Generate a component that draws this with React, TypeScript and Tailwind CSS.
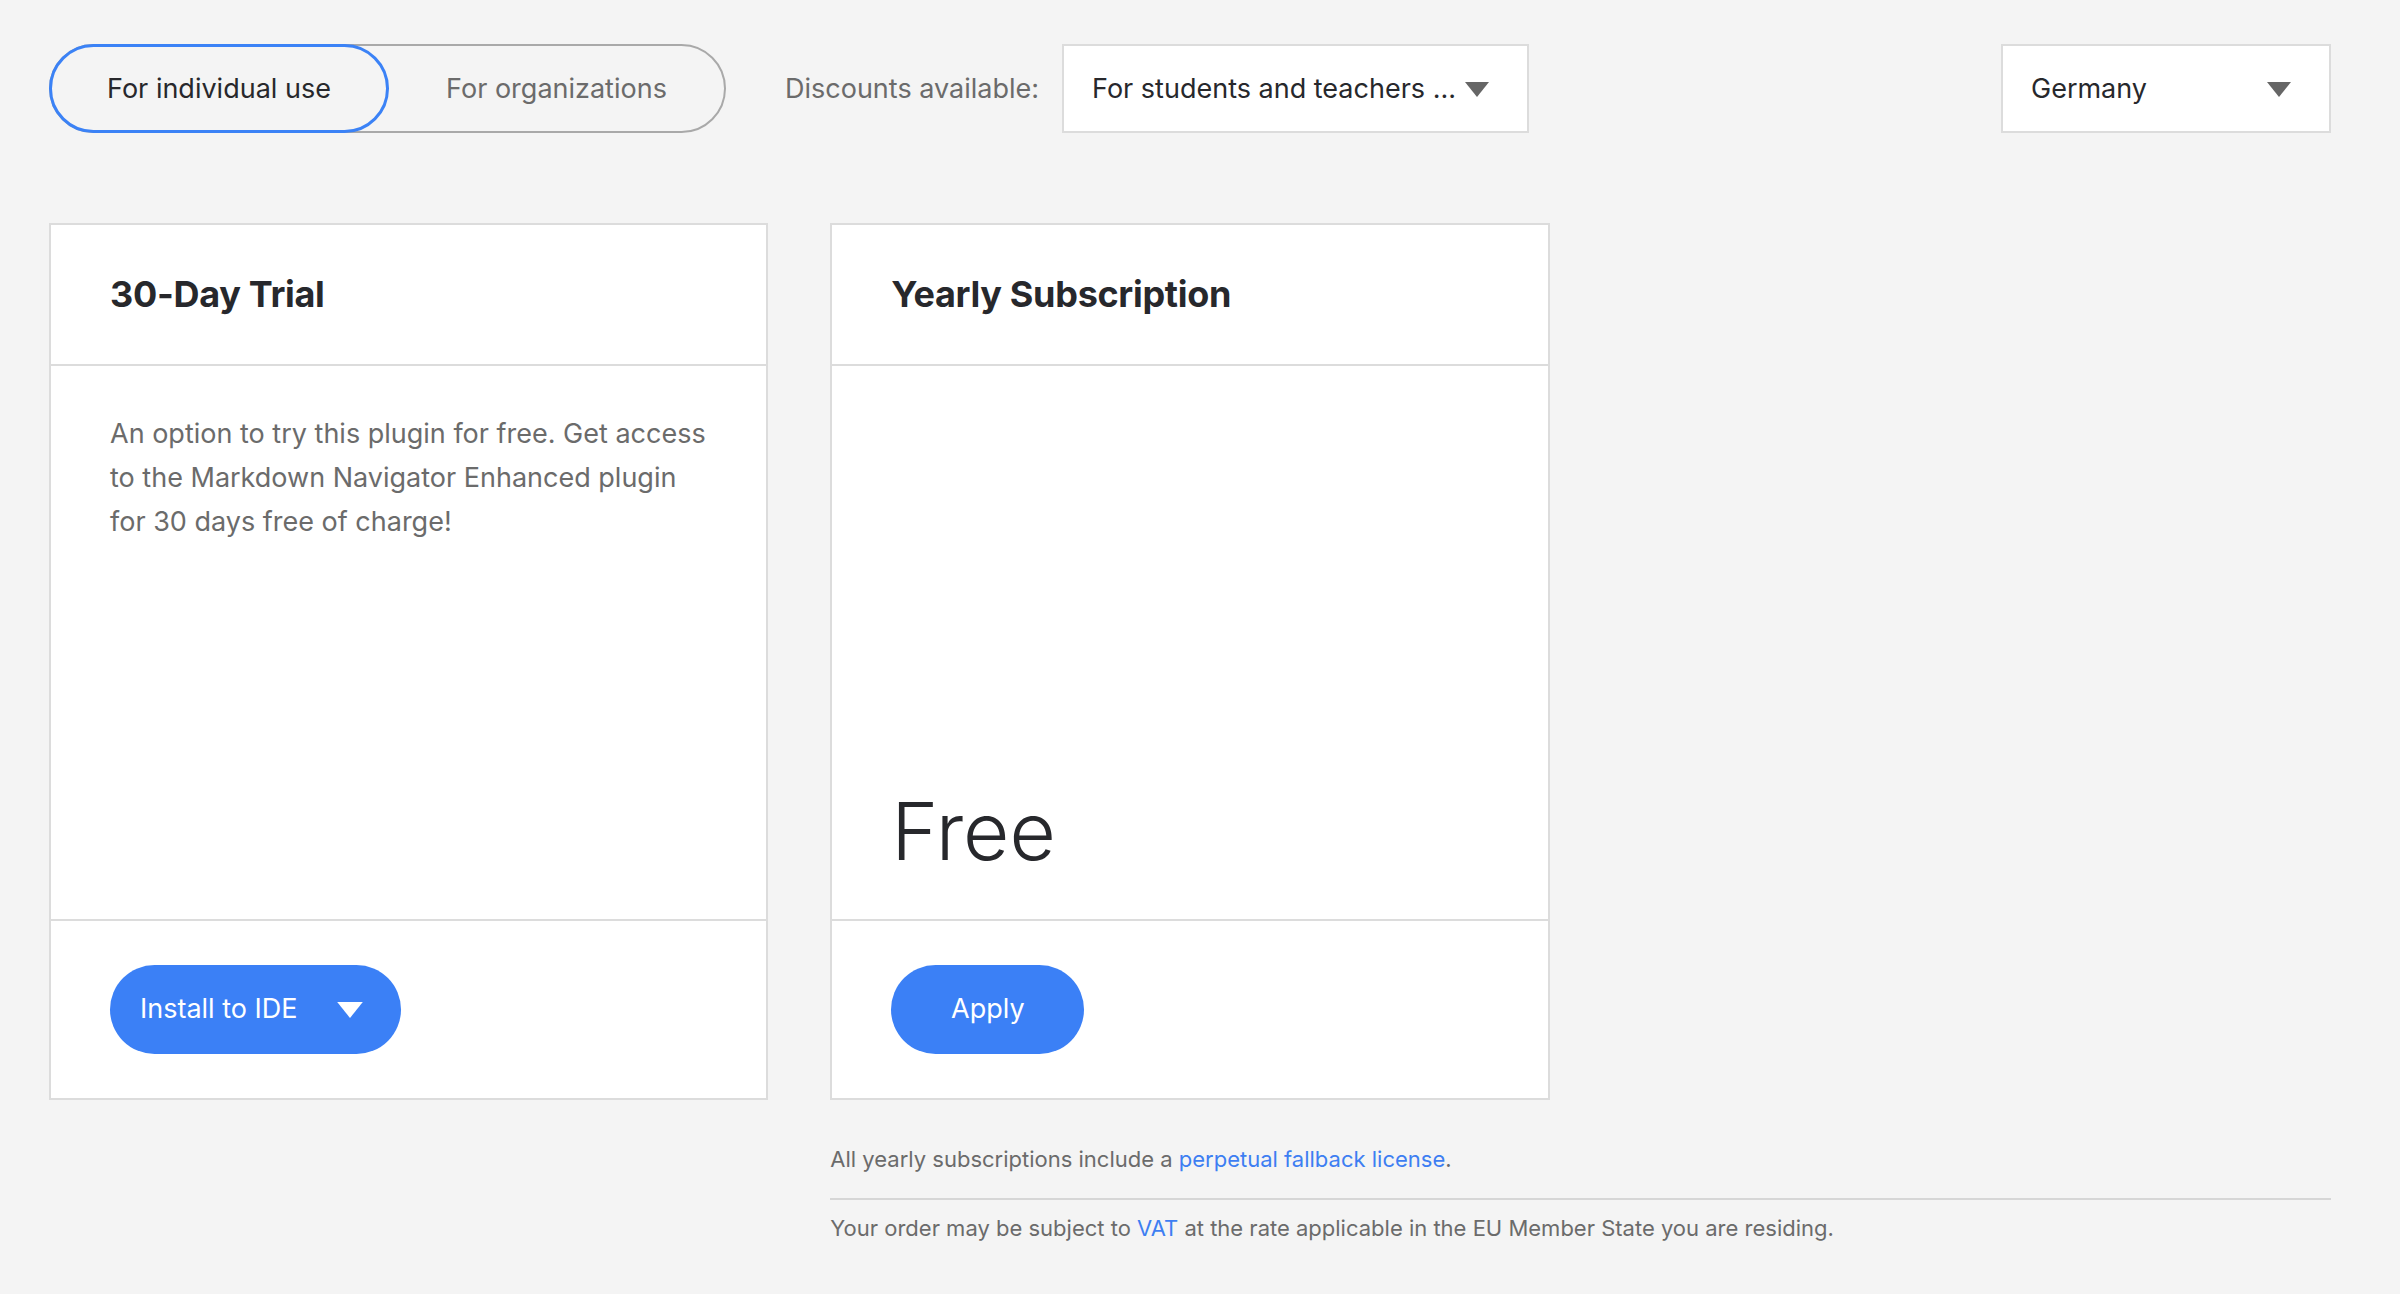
import React from "react"

function Caret({ className }: { className?: string }) {
  return (
    <svg className={className} viewBox="0 0 24 15" fill="currentColor">
      <path d="M0 0h24L12 15z" />
    </svg>
  )
}

function SelectBox({ label, width }: { label: string; width: string }) {
  return (
    <button
      className={`flex h-[89px] items-center justify-between border-2 border-[#dcdcdc] bg-white pt-[2px] pr-[38px] pl-[28px] ${width}`}
    >
      <span className="text-[27px] text-[#27282c]">{label}</span>
      <Caret className="h-[15px] w-[24px] text-[#666]" />
    </button>
  )
}

function Card({
  title,
  children,
  footer,
}: {
  title: string
  children: React.ReactNode
  footer: React.ReactNode
}) {
  return (
    <div className="flex h-[877px] flex-col border-2 border-[#dcdcdc] bg-white">
      <div className="flex h-[141px] items-center border-b-2 border-[#dcdcdc] px-[59px]">
        <h2 className="-mt-[2px] text-[36px] font-bold tracking-[-0.3px] text-[#27282c]">{title}</h2>
      </div>
      <div className="flex flex-1 flex-col px-[59px] pt-[46px] pb-[48px]">{children}</div>
      <div className="flex h-[179px] items-center border-t-2 border-[#dcdcdc] px-[59px]">{footer}</div>
    </div>
  )
}

export default function App() {
  return (
    <div className="min-h-[1294px] bg-[#f4f4f4] font-['Inter',sans-serif] antialiased">
      <div className="w-[2331px] pl-[49px] pt-[44px]">
        {/* Top bar */}
        <div className="flex items-center">
          <div className="flex h-[89px] w-[677px] items-stretch rounded-full border-2 border-[#a9a9a9]">
            <button className="-my-[2px] -ml-[2px] w-[340px] rounded-full border-[3px] border-[#3b82f6] pt-[2px] text-[27px] text-[#27282c]">
              For individual use
            </button>
            <button className="flex-1 pt-[2px] text-[27px] text-[#6b6b6b]">For organizations</button>
          </div>
          <span className="ml-[59px] pt-[2px] text-[27px] text-[#6b6b6b]">Discounts available:</span>
          <SelectBox label="For students and teachers ..." width="ml-[23px] w-[467px]" />
          <SelectBox label="Germany" width="ml-auto w-[330px]" />
        </div>

        {/* Plans */}
        <div className="mt-[90px] grid grid-cols-3 gap-x-[62px]">
          <Card
            title="30-Day Trial"
            footer={
              <button className="flex h-[89px] w-[291px] items-center rounded-full bg-[#3b80f6] pl-[30px] text-[27px] text-white">
                Install to IDE
                <Caret className="ml-[39px] h-[16px] w-[26px] text-white" />
              </button>
            }
          >
            <p className="text-[27px] leading-[44px] text-[#6b6b6b]">
              An option to try this plugin for free. Get access to the Markdown Navigator Enhanced plugin for 30 days
              free of charge!
            </p>
          </Card>
          <Card
            title="Yearly Subscription"
            footer={
              <button className="h-[89px] w-[193px] rounded-full bg-[#3b80f6] text-[27px] text-white">Apply</button>
            }
          >
            <div className="mt-auto text-[80px] font-light leading-none text-[#27282c]">Free</div>
          </Card>

          {/* Notes */}
          <div className="col-span-2 col-start-2 pt-[43px] text-[22px] text-[#6b6b6b]">
            <p className="pb-[22px]">
              All yearly subscriptions include a <a className="text-[#3d7ef2]">perpetual fallback license</a>.
            </p>
            <p className="border-t-2 border-[#d6d6d6] pt-[12px]">
              Your order may be subject to <a className="text-[#3d7ef2]">VAT</a> at the rate applicable in the EU Member
              State you are residing.
            </p>
          </div>
        </div>
      </div>
    </div>
  )
}
